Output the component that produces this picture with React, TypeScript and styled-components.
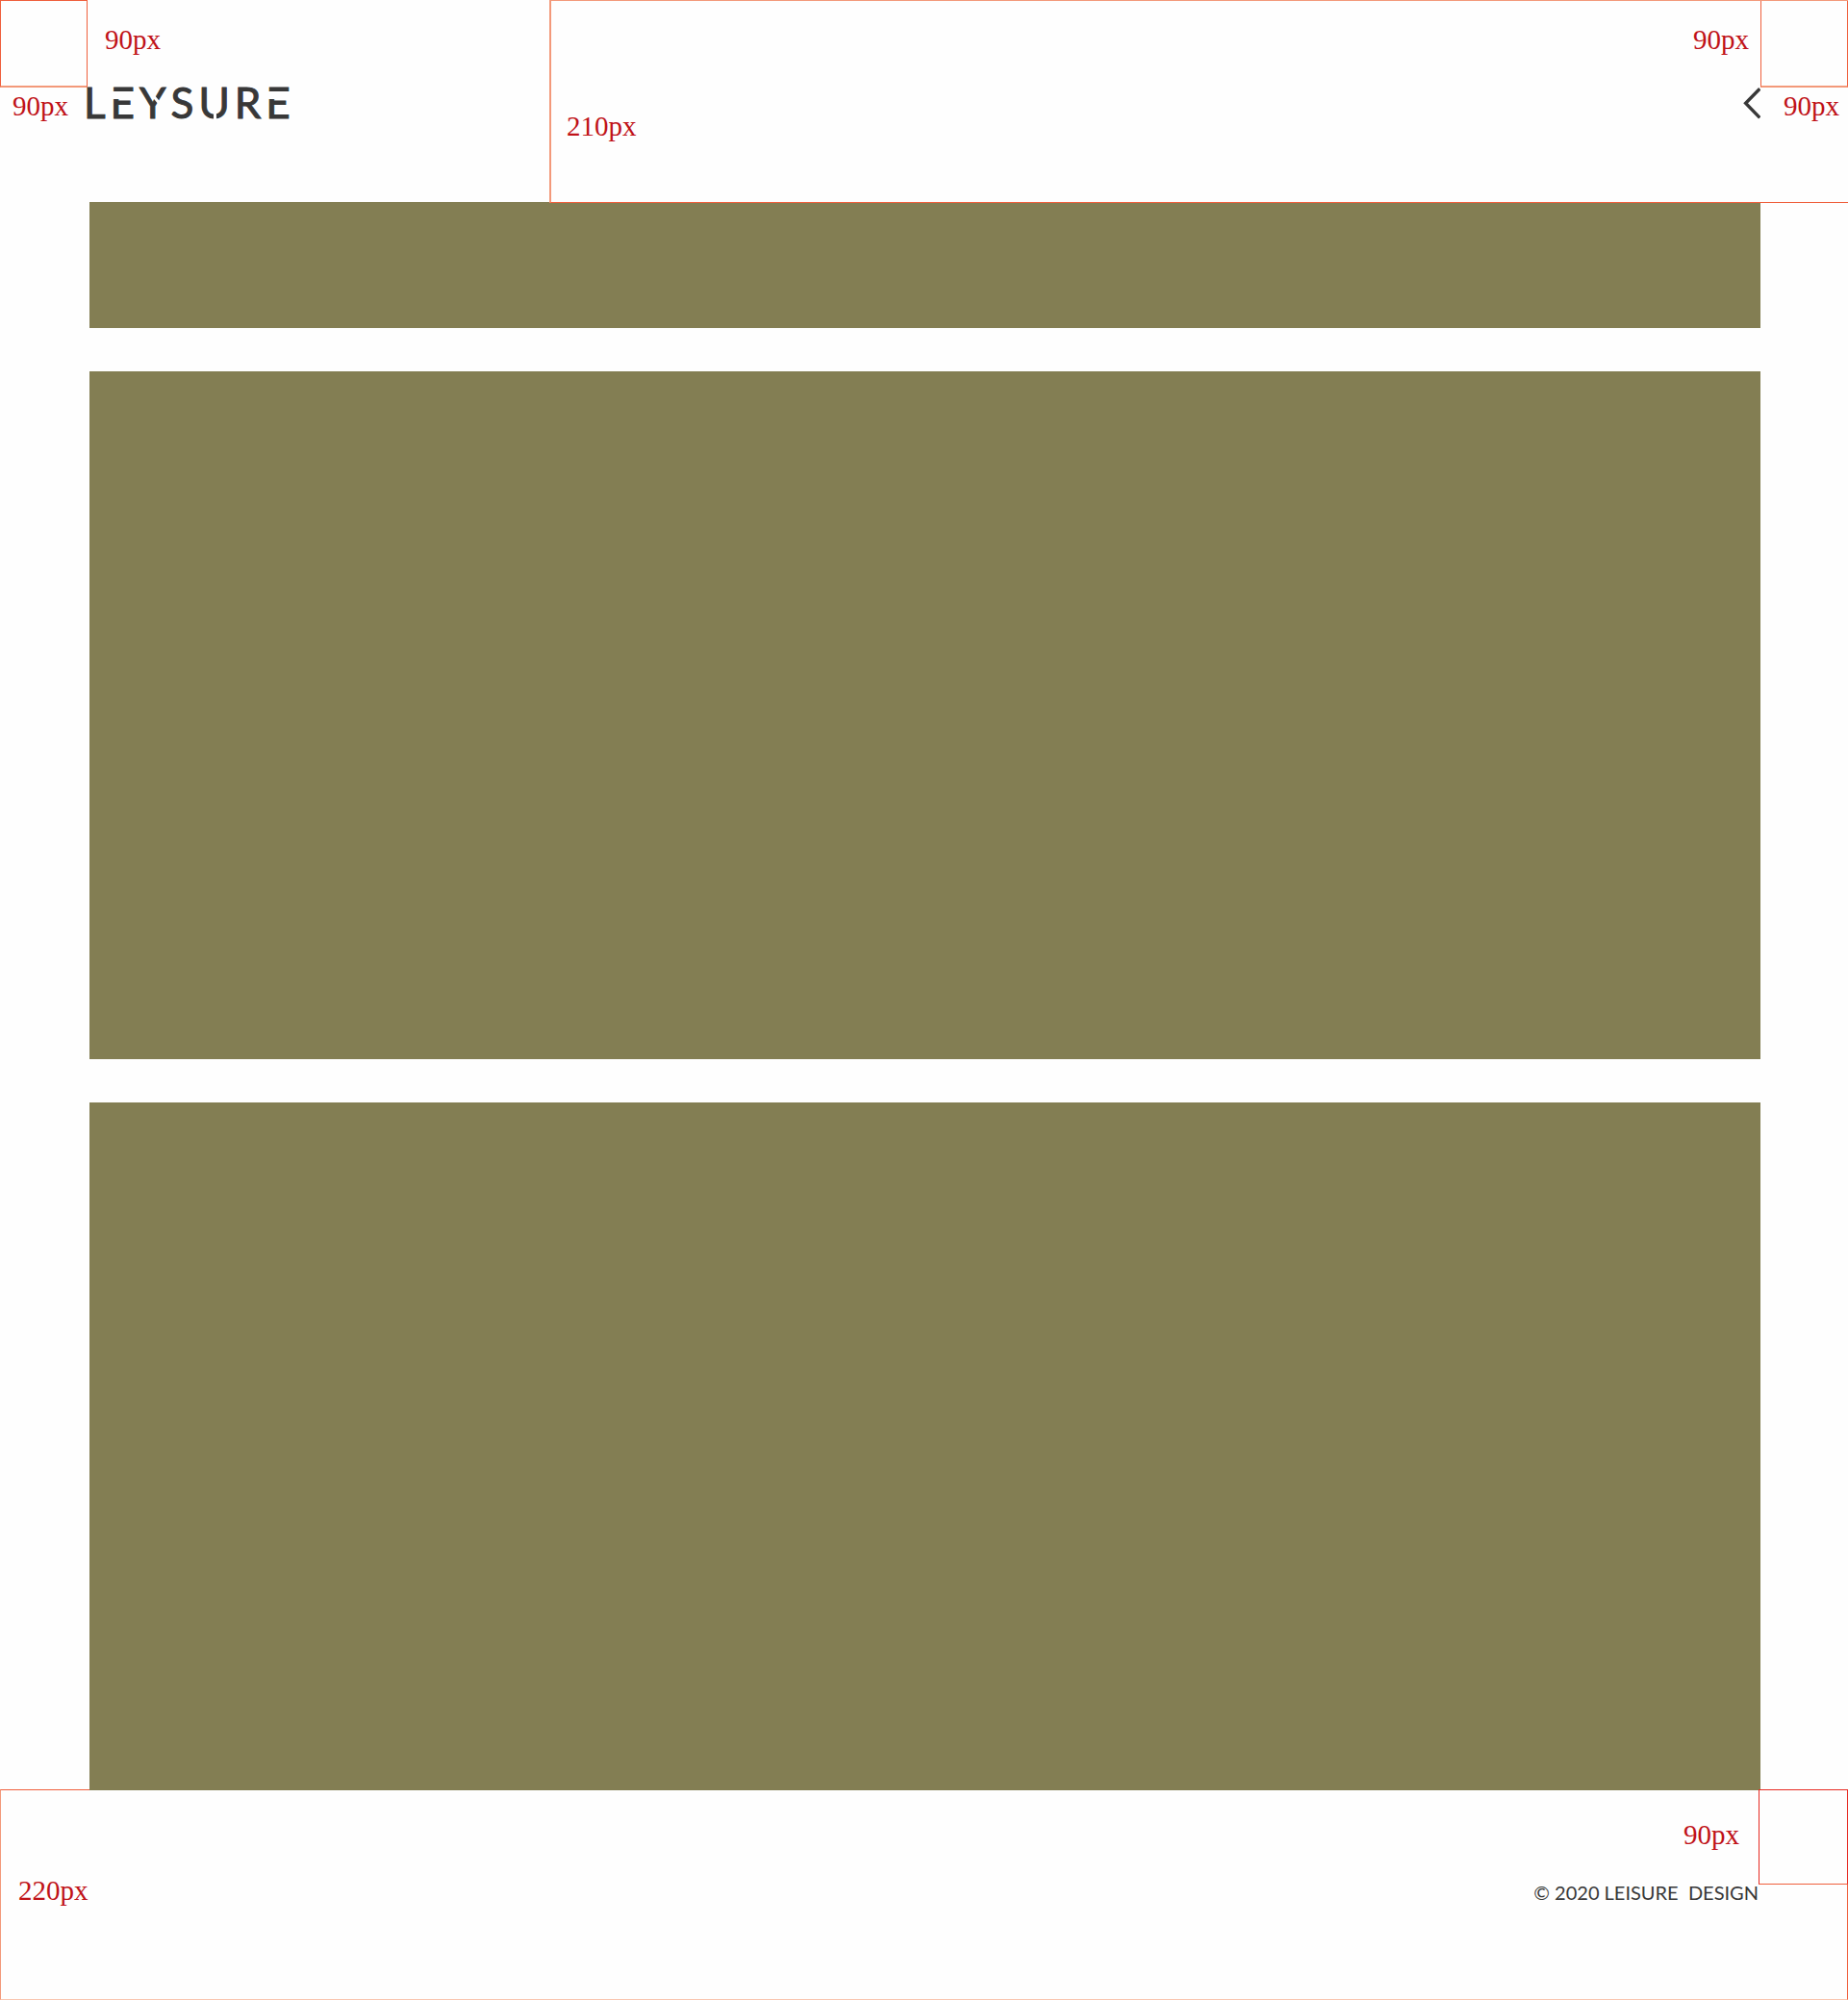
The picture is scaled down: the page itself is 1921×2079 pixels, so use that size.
import React from "react";
import styled, { createGlobalStyle, css } from "styled-components";

const color = {
  olive: "#837e53",
  ink: "#383838",
  red: "#c01218",
  line: "#ef5f3c",
  soft: "#f3997a",
  faint: "#f9c6b0",
};

const GlobalStyle = createGlobalStyle`
  *, *::before, *::after { box-sizing: border-box; }
  body { margin: 0; background: #fefefe; color: ${color.ink}; }
`;

const Header = styled.header`
  display: grid;
  grid-template-columns: 91px minmax(0, 480fr) minmax(0, 1259fr) 91px;
  grid-template-rows: 91px 120px;
  margin-bottom: -1px;
`;

const Region = styled.div`
  grid-area: 1 / 3 / 3 / 5;
  position: relative;
  z-index: 1;
  pointer-events: none;
  border-top: 1px solid ${color.soft};
  border-left: 2px solid ${color.soft};
  border-bottom: 1px solid ${color.line};
`;

const Corner = styled.div<{ $col: number }>`
  grid-row: 1;
  grid-column: ${(p) => p.$col};
  border: 1px solid ${color.line};
  border-bottom: 2px solid ${color.soft};
`;

const Label = styled.span<{ $row: string; $col: string; $pad: string; $end?: boolean }>`
  grid-row: ${(p) => p.$row};
  grid-column: ${(p) => p.$col};
  justify-self: ${(p) => (p.$end ? "end" : "start")};
  align-self: start;
  padding: ${(p) => p.$pad};
  font: 29px/32px "Liberation Serif", serif;
  color: ${color.red};
  white-space: nowrap;
`;

const Logo = styled.a`
  grid-row: 2;
  grid-column: 2;
  justify-self: start;
  align-self: start;
  display: flex;
  gap: 5px;
  margin: -2px 0 0 -4px;
  font: 44px/34px Lato, sans-serif;
  -webkit-text-stroke: 1px ${color.ink};
  color: ${color.ink};
  text-decoration: none;
`;

const cuts = {
  none: css``,
  stem: css`
    &::after { left: 0; top: 6px; width: 12px; height: 8px; }
  `,
  arm: css`
    &::after { left: 12px; top: 13px; width: 11px; height: 3px; transform: rotate(50deg); }
  `,
  base: css`
    &::after { left: 50%; bottom: -2px; width: 3px; height: 8px; margin-left: -1px; }
  `,
};

const Letter = styled.span<{ $cut: keyof typeof cuts }>`
  position: relative;
  &::after {
    content: "";
    position: absolute;
    background: #fefefe;
  }
  ${(p) => cuts[p.$cut]}
`;

const Back = styled.button`
  grid-row: 2;
  grid-column: 3;
  justify-self: end;
  align-self: start;
  display: flex;
  padding: 0;
  border: 0;
  background: none;
  color: ${color.ink};
  cursor: pointer;
`;

const Main = styled.main`
  display: flex;
  flex-direction: column;
  gap: 45px;
  padding: 0 91px 0 93px;
`;

const Block = styled.section<{ $size: "banner" | "panel" }>`
  height: ${(p) => (p.$size === "banner" ? 131 : 715)}px;
  background: ${color.olive};
`;

const Footer = styled.footer`
  display: grid;
  grid-template-columns: minmax(0, 1fr) 92px;
  grid-template-rows: 98px 119px;
  border: 1px solid ${color.line};
  border-left-color: ${color.soft};
  border-bottom-color: ${color.faint};
  margin-top: -1px;
`;

const FooterCorner = styled.div`
  grid-area: 1 / 2;
  margin: -1px -1px 0 0;
  border: 1px solid #e62a22;
  border-bottom-color: ${color.line};
`;

const Copyright = styled.small`
  grid-area: 2 / 1;
  justify-self: end;
  font: 20px/16px Lato, sans-serif;
  white-space: pre;
`;

const wordmark: [string, keyof typeof cuts][] = [
  ["L", "none"],
  ["E", "stem"],
  ["Y", "arm"],
  ["S", "none"],
  ["U", "base"],
  ["R", "none"],
  ["E", "stem"],
];

export default function App() {
  return (
    <>
      <GlobalStyle />
      <Header>
        <Region />
        <Corner $col={1} />
        <Label $row="1" $col="2" $pad="25px 0 0 18px">90px</Label>
        <Label $row="2" $col="1" $pad="3px 0 0 13px">90px</Label>
        <Logo href="#" aria-label="LEYSURE">
          {wordmark.map(([char, cut], i) => (
            <Letter key={i} $cut={cut}>{char}</Letter>
          ))}
        </Logo>
        <Label $row="2" $col="3" $pad="24px 0 0 18px">210px</Label>
        <Label $row="1" $col="3" $pad="25px 12px 0 0" $end>90px</Label>
        <Back type="button" aria-label="Back">
          <svg width="18" height="33" viewBox="0 0 18 33" fill="none" stroke="currentColor" strokeWidth="3.4">
            <path d="M17.3 1.2 2.6 16.3 17.3 31.4" />
          </svg>
        </Back>
        <Corner $col={4} />
        <Label $row="2" $col="4" $pad="3px 0 0 24px">90px</Label>
      </Header>
      <Main>
        <Block $size="banner" />
        <Block $size="panel" />
        <Block $size="panel" />
      </Main>
      <Footer>
        <Label $row="1 / 3" $col="1" $pad="88px 0 0 18px">220px</Label>
        <Label $row="1" $col="1" $pad="30px 20px 0 0" $end>90px</Label>
        <FooterCorner />
        <Copyright>{"© 2020 LEISURE  DESIGN"}</Copyright>
      </Footer>
    </>
  );
}
